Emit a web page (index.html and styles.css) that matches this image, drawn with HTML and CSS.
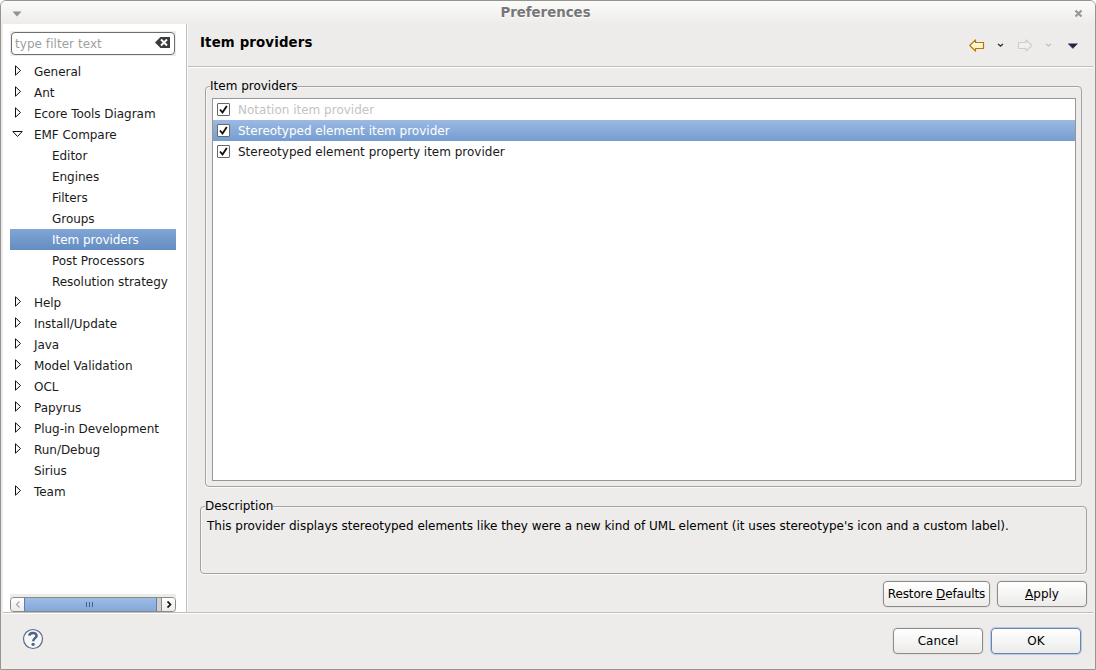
FILE: index.html
```html
<!DOCTYPE html>
<html lang="en">
<head>
<meta charset="utf-8">
<title>Preferences</title>
<link rel="stylesheet" href="styles.css">
</head>
<body>
<div class="window">
  <header class="titlebar">
    <svg class="menu-mark" width="10" height="6"><path d="M.5 .5h9L5 5.500z" fill="#929292"/></svg>
    <span class="title">Preferences</span>
    <svg class="close" width="9" height="9"><path d="M1.500 1.500l6 6M7.500 1.500l-6 6" stroke="#989898" stroke-width="2.200"/></svg>
  </header>
  <div class="main">
    <aside class="sidebar">
      <div class="filter-wrap"><div class="filter"><span>type filter text</span>
        <svg width="15" height="11"><path d="M0 5.500L5.500 0H15V11H5.500z" fill="#3b3b3b"/><path d="M6 2.500l6 6M12 2.500l-6 6" stroke="#fff" stroke-width="1.900"/></svg>
      </div></div>
      <ul class="tree">
        <li class="closed">General</li>
        <li class="closed">Ant</li>
        <li class="closed">Ecore Tools Diagram</li>
        <li class="open">EMF Compare</li>
        <li class="child">Editor</li>
        <li class="child">Engines</li>
        <li class="child">Filters</li>
        <li class="child">Groups</li>
        <li class="child selected">Item providers</li>
        <li class="child">Post Processors</li>
        <li class="child">Resolution strategy</li>
        <li class="closed">Help</li>
        <li class="closed">Install/Update</li>
        <li class="closed">Java</li>
        <li class="closed">Model Validation</li>
        <li class="closed">OCL</li>
        <li class="closed">Papyrus</li>
        <li class="closed">Plug-in Development</li>
        <li class="closed">Run/Debug</li>
        <li>Sirius</li>
        <li class="closed">Team</li>
      </ul>
      <div class="scroll-wrap"><div class="scrollbar">
        <span class="step"><svg width="6" height="7"><path d="M4.500 .5L1.500 3.500l3 3" fill="none" stroke="#aaa" stroke-width="1.300"/></svg></span>
        <span class="thumb"><i></i><i></i><i></i></span>
        <span class="step end"><svg width="6" height="7"><path d="M1.500 .5l3 3-3 3" fill="none" stroke="#111" stroke-width="1.700"/></svg></span>
      </div></div>
    </aside>
    <section class="content">
      <div class="page-head">
        <h1>Item providers</h1>
        <div class="nav">
          <svg width="112" height="14">
            <defs><linearGradient id="gold" x2="0" y2="1"><stop offset="0" stop-color="#fffef0"/><stop offset="1" stop-color="#fdeeb0"/></linearGradient></defs>
            <path d="M.8 6.500L6.500 .9V3.500H14.500V9.500H6.500V12.100z" fill="url(#gold)" stroke="#b3750c" stroke-width="1.200" stroke-linejoin="round"/>
            <path d="M29 5l2.500 2 2.500-2" fill="none" stroke="#333" stroke-width="1.400"/>
            <path d="M62.700 6.500L57 .9V3.500H49.500V9.500H57V12.100z" fill="#f0f0ef" stroke="#cdcdcc" stroke-width="1.100" stroke-linejoin="round"/>
            <path d="M77 5l2.500 2 2.500-2" fill="none" stroke="#bdbdbd" stroke-width="1.200"/>
            <path d="M99 4.500h10l-5 5z" fill="#2b2137"/><path d="M99.500 5l4.500 4.500" stroke="#552a91"/>
          </svg>
        </div>
      </div>
      <div class="page-body">
        <div class="group providers">
          <div class="legend">Item providers</div>
          <ul class="list">
            <li class="muted"><svg class="check" width="13" height="13"><rect x=".5" y=".5" width="12" height="12" rx=".5" fill="#fff" stroke="#686868"/><path d="M3 6.500l2.500 3L9.800 3" fill="none" stroke="#111" stroke-width="1.900"/></svg><span>Notation item provider</span></li>
            <li class="active"><svg class="check" width="13" height="13"><rect x=".5" y=".5" width="12" height="12" rx=".5" fill="#fff" stroke="#686868"/><path d="M3 6.500l2.500 3L9.800 3" fill="none" stroke="#111" stroke-width="1.900"/></svg><span>Stereotyped element item provider</span></li>
            <li><svg class="check" width="13" height="13"><rect x=".5" y=".5" width="12" height="12" rx=".5" fill="#fff" stroke="#686868"/><path d="M3 6.500l2.500 3L9.800 3" fill="none" stroke="#111" stroke-width="1.900"/></svg><span>Stereotyped element property item provider</span></li>
          </ul>
        </div>
        <div class="group description">
          <div class="legend">Description</div>
          <p>This provider displays stereotyped elements like they were a new kind of UML element (it uses stereotype's icon and a custom label).</p>
        </div>
        <div class="actions">
          <button class="wide">Restore <u>D</u>efaults</button>
          <button><u>A</u>pply</button>
        </div>
      </div>
    </section>
  </div>
  <footer class="footer">
    <svg class="help" width="22" height="22"><circle cx="11" cy="11" r="9.500" fill="#f7f7f8" stroke="#5b6b8c" stroke-width="1.200"/><path d="M7.300 7.600C7.600 3.900 14.900 4 14.600 7.900C14.400 10.200 11.200 10.200 11.200 13.200" fill="none" stroke="#4c6089" stroke-width="2.500"/><circle cx="11.100" cy="16.300" r="1.600" fill="#4c6089"/></svg>
    <div class="footer-buttons">
      <button>Cancel</button>
      <button class="default">OK</button>
    </div>
  </footer>
</div>
</body>
</html>
```

FILE: styles.css
```css
* { box-sizing: border-box; }
body { margin: 0; background: #fff; font: 12px/21px "DejaVu Sans", sans-serif; color: #1a1a1a; }
ul, p, h1 { margin: 0; padding: 0; list-style: none; }
.window { width: 1096px; height: 670px; display: flex; flex-direction: column; background: #edeceb; border: 1px solid #96948f; border-radius: 6px 6px 0 0; overflow: hidden; }
.titlebar { height: 23px; flex: none; display: grid; grid-template-columns: 30px 1fr 30px; align-items: center; padding: 0 2px 0 1px; background: linear-gradient(#fbfbfa, #edeceb); }
.title { text-align: center; font-weight: bold; font-size: 13.330px; padding-right: 4px; color: #777; text-shadow: 0 1px #fff; }
.menu-mark { margin: 3px 0 0 10px; }
.close { margin: 2px 0 0 11px; }
.main { height: 588px; flex: none; display: flex; padding: 0 2px; }
.sidebar { width: 184px; flex: none; background: #fff; border-right: 1px solid #c0bfbe; padding: 7px 10px 0 7px; display: flex; flex-direction: column; }
.filter-wrap { height: 25px; background: #edeceb; padding: 1px; flex: none; }
.filter { height: 23px; background: #fff; border: 1px solid #6e6e6e; border-radius: 4px; display: flex; align-items: center; justify-content: space-between; padding: 0 4px 0 3px; color: #9f9f9f; }
.filter span { padding-top: 1px; letter-spacing: .05px; }
.filter svg { margin-top: -2px; }
.tree { margin-top: 5px; flex: 1; letter-spacing: -.04px; }
.tree li { height: 21px; line-height: 23px; padding-left: 24px; white-space: nowrap; }
.tree .closed, .tree .open { padding-left: 0; display: flex; }
.tree .closed::before, .tree .open::before { content: ""; width: 24px; height: 12px; margin-top: 4px; flex: none; background: url("data:image/svg+xml,%3Csvg xmlns='http://www.w3.org/2000/svg' width='24' height='12'%3E%3Cpath d='M5.500 .8v9.400l5-4.700z' fill='white' stroke='%23111' stroke-width='1'/%3E%3C/svg%3E") no-repeat; }
.tree .open::before { background-image: url("data:image/svg+xml,%3Csvg xmlns='http://www.w3.org/2000/svg' width='24' height='12'%3E%3Cpath d='M2.800 3.500h9.400l-4.700 5z' fill='white' stroke='%23111' stroke-width='1'/%3E%3C/svg%3E"); }
.tree .child { padding-left: 42px; }
.tree .selected { color: #fff; background: linear-gradient(#81a5d6, #648dc1); }
.scroll-wrap { height: 18px; background: #edeceb; padding-top: 3px; }
.scrollbar { height: 15px; border: 1px solid #8b8986; border-radius: 4px; overflow: hidden; background: #d3d0cc; display: flex; }
.step { width: 13px; flex: none; background: linear-gradient(#fff, #ecebea); display: flex; align-items: center; justify-content: center; }
.step.end { width: 14px; margin-left: auto; border-left: 1px solid #8b8986; }
.thumb { width: 133px; flex: none; padding-right: 3px; background: linear-gradient(#9ebce6, #82a8da); border: solid #5b7fae; border-width: 0 1px; display: flex; gap: 2px; align-items: center; justify-content: center; }
.thumb i { width: 1px; height: 5px; background: #41618f; }
.content { flex: 1; border-left: 1px solid #f8f8f8; display: flex; flex-direction: column; }
.page-head { height: 43px; flex: none; display: flex; justify-content: space-between; border-bottom: 1px solid #bebdbc; box-shadow: 0 1px #fff; padding: 7px 12px 0; }
.page-head h1 { font-size: 13.330px; line-height: 23px; letter-spacing: .15px; color: #000; }
.nav { margin-top: 8px; }
.nav svg { display: block; }
.page-body { padding: 19px 6px 0 12px; color: #000; }
.group { border: 1px solid #a5a3a1; border-radius: 4px; box-shadow: 0 1px #fafafa, inset 1px 1px #f7f7f6; }
.legend { width: max-content; height: 14px; line-height: 16px; margin-top: -9px; background: #edeceb; }
.providers { height: 401px; margin: 0 5px; padding: 0 5px 5px 6px; display: flex; flex-direction: column; }
.providers .legend { margin-left: -2px; }
.list { flex: 1; margin-top: 6px; border: 1px solid #979694; background: #fff; }
.list li { height: 21px; display: flex; align-items: center; gap: 8px; padding-left: 4px; color: #1a1a1a; }
.list span { line-height: 19px; padding-top: 2px; }
.list .muted { color: #c5c3c1; }
.list .active { color: #fff; background: linear-gradient(#9bb9e3, #759dd0); }
.check { flex: none; }
.description { margin-top: 19px; height: 68px; padding-left: 4px; }
.description p { padding: 4px 0 0 2px; white-space: nowrap; letter-spacing: -.012px; }
.actions { margin-top: 7px; display: flex; gap: 7px; justify-content: flex-end; }
button { width: 90px; height: 26px; padding: 0; font: 12px "DejaVu Sans", sans-serif; color: #000; border: 1px solid #8d8b88; border-radius: 4px; background: linear-gradient(#fff, #ecebea); box-shadow: 0 0 0 1px #e4e3e2; white-space: nowrap; }
.wide { width: 107px; letter-spacing: -.12px; }
.default { border-color: #6986b3; box-shadow: 0 0 0 1px #b9cbe4; }
.footer { flex: 1; margin: 0 2px; border-top: 1px solid #bebdbc; box-shadow: inset 0 1px #fff; display: flex; justify-content: space-between; padding: 15px 12px 0 19px; }
.footer-buttons { display: flex; gap: 8px; }
```
